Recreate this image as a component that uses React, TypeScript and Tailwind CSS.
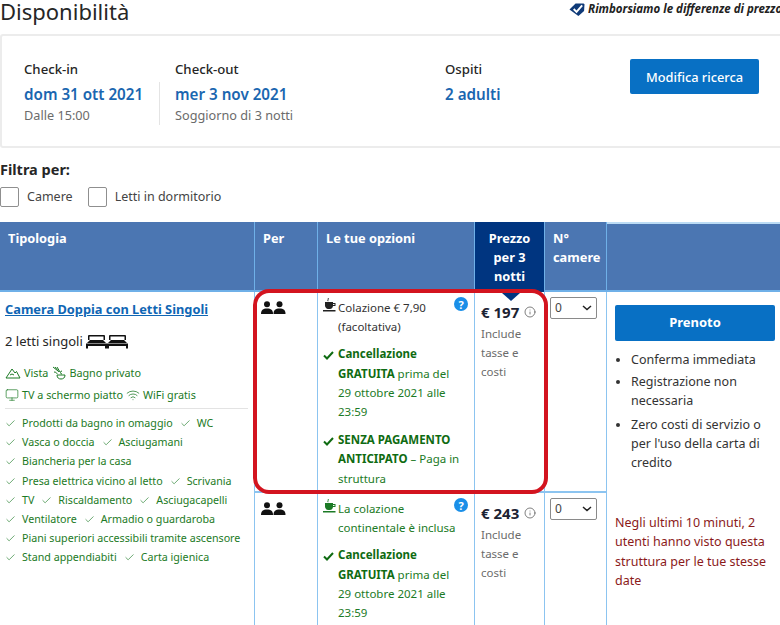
import { Check, Info, Monitor, Wifi } from "lucide-react"

const People = () => (
  <svg width="25" height="14" viewBox="0 0 25 14" fill="#111">
    <circle cx="6" cy="3.2" r="3" />
    <path d="M0 13c0-4 2-5.500 6-5.500s6 1.500 6 5.500z" />
    <circle cx="18.500" cy="3.200" r="3" />
    <path d="M12.500 13c0-4 2-5.500 6-5.500s6 1.500 6 5.500z" />
  </svg>
)

const Bed = () => (
  <svg width="21" height="15" viewBox="0 0 21 15" fill="#111">
    <path d="M3 1h15a1 1 0 0 1 1 1v4h-1.500V2.500h-14V6H2V2a1 1 0 0 1 1-1z" />
    <path d="M4 6h13l3 3H1z" />
    <rect x="0" y="9.500" width="21" height="2.500" />
    <rect x="0" y="12" width="2" height="2.500" />
    <rect x="19" y="12" width="2" height="2.500" />
  </svg>
)

const Cup = ({ color }: { color: string }) => (
  <svg width="13" height="15" viewBox="0 0 13 15" fill={color} className="shrink-0">
    <path d="M5.500 0c1 1 -1 2 0 3.200h-.8c-1-1 .8-2 0-3.200z" />
    <path d="M2 4h8v1h2.500v3H10c-.3 2-1.500 3-3 3H5C3.500 11 2.300 9.500 2 8zM10 6v1h1.500V6z" />
    <rect x="0" y="12" width="12.500" height="1.500" />
  </svg>
)

const Help = () => (
  <span className="absolute right-[6px] top-[5px] flex h-[14px] w-[14px] items-center justify-center rounded-full bg-[#1a8fe8] text-[11px] font-bold leading-none text-white">
    ?
  </span>
)

const GreenCheck = () => (
  <svg width="11" height="9" viewBox="0 0 11 9" className="absolute left-0 top-[7px]">
    <path d="M1 4.500 4 7.500 10 1" fill="none" stroke="#0f6b12" strokeWidth="2" />
  </svg>
)

const Perk = ({ label }: { label: string }) => (
  <span className="mr-[7px] inline-flex items-center gap-[6px]">
    <Check size={11} strokeWidth={1.4} className="text-[#1c7a25]" />
    {label}
  </span>
)

const perkRows = [
  ["Prodotti da bagno in omaggio", "WC"],
  ["Vasca o doccia", "Asciugamani"],
  ["Biancheria per la casa"],
  ["Presa elettrica vicino al letto", "Scrivania"],
  ["TV", "Riscaldamento", "Asciugacapelli"],
  ["Ventilatore", "Armadio o guardaroba"],
  ["Piani superiori accessibili tramite ascensore"],
  ["Stand appendiabiti", "Carta igienica"],
]

const RateOptions = ({ breakfast }: { breakfast: "paid" | "included" }) => (
  <div className="relative h-full border-r border-[#8cc4f0] pl-[5px] pr-[6px] pt-[6px] text-[11.5px] leading-[19.2px]">
    <Help />
    {breakfast === "paid" ? (
      <div className="relative pl-[15px] text-[#333]">
        <span className="absolute left-0 top-0">
          <Cup color="#222" />
        </span>
        Colazione € 7,90
        <br />
        (facoltativa)
      </div>
    ) : (
      <div className="relative pl-[15px] text-[#1b7a25]">
        <span className="absolute left-0 top-0">
          <Cup color="#1b7a25" />
        </span>
        La colazione
        <br />
        continentale è inclusa
      </div>
    )}
    <div className="relative mt-[8px] pl-[15px] text-[#1b7a25]">
      <GreenCheck />
      <b className="text-[#0f6b12]">Cancellazione</b>
      <br />
      <b className="text-[#0f6b12]">GRATUITA</b> prima del
      <br />
      29 ottobre 2021 alle
      <br />
      23:59
    </div>
    {breakfast === "paid" && (
      <div className="relative mt-[9px] pl-[15px] text-[#1b7a25]">
        <GreenCheck />
        <b className="text-[#0f6b12]">SENZA PAGAMENTO</b>
        <br />
        <b className="text-[#0f6b12]">ANTICIPATO</b> – Paga in
        <br />
        struttura
      </div>
    )}
  </div>
)

const Price = ({ value }: { value: string }) => (
  <div className="h-full border-r border-[#8cc4f0] pl-[6px] pt-[8px]">
    <div className="flex items-center gap-[5px]">
      <span className="text-[15px] font-bold leading-[24px] text-[#1c2333]">€ {value}</span>
      <Info size={12} strokeWidth={1.5} className="text-[#555]" />
    </div>
    <div className="w-[50px] text-[11.5px] leading-[19.2px] text-[#6b6b6b]">Include tasse e costi</div>
  </div>
)

const RoomSelect = () => (
  <div className="h-full pl-[5px] pt-[5px]">
    <div className="flex h-[22px] w-[47px] items-center justify-between rounded-[2px] border border-[#8a8a8a] bg-white pl-[4px] pr-[4px] text-[12px] text-[#444]">
      0
      <svg width="10" height="6" viewBox="0 0 10 6">
        <path d="M1 1l4 3.500L9 1" fill="none" stroke="#222" strokeWidth="1.500" />
      </svg>
    </div>
  </div>
)

export default function App() {
  return (
    <div
      className="relative h-[625px] w-[780px] overflow-hidden bg-white text-[#262626]"
      style={{ fontFamily: '"Noto Sans", sans-serif' }}
    >
      <div className="flex h-[34px] items-start justify-between">
        <h1 className="text-[22px] leading-[22px] text-[#262626]">Disponibilità</h1>
        <div className="flex items-center gap-[3px] pt-[1px] text-[11.5px] font-bold italic leading-[16px] text-[#222] whitespace-nowrap">
          <svg width="16" height="15" viewBox="0 0 17 15">
            <path d="M0.500 7.500 7 1h8.500l1 1-.5 7-6 5.500z" fill="#0f3a78" />
            <path d="M5 7l3 3 6-7" fill="none" stroke="#fff" strokeWidth="2" />
          </svg>
          <span className="w-[192px] overflow-hidden">Rimborsiamo le differenze di prezzo</span>
        </div>
      </div>

      <div className="flex h-[114px] items-start rounded-l-[3px] border-y-2 border-l-2 border-[#ececec] pl-[22px] text-[12.700px] leading-[20px]">
        <div className="mt-[23px] w-[135px]">
          <div className="text-[13.200px] font-medium">Check-in</div>
          <div className="mt-[5px] text-[15.200px] font-semibold text-[#1a66b0]">dom 31 ott 2021</div>
          <div className="mt-[1px] text-[#6b6b6b]">Dalle 15:00</div>
        </div>
        <div className="mt-[46px] h-[43px] w-px bg-[#e4e4e4]" />
        <div className="mt-[23px] w-[285px] pl-[15px]">
          <div className="text-[13.200px] font-medium">Check-out</div>
          <div className="mt-[5px] text-[15.200px] font-semibold text-[#1a66b0]">mer 3 nov 2021</div>
          <div className="mt-[1px] text-[#6b6b6b]">Soggiorno di 3 notti</div>
        </div>
        <div className="mt-[23px] w-[185px]">
          <div className="text-[13.200px] font-medium">Ospiti</div>
          <div className="mt-[5px] text-[15.200px] font-semibold text-[#1a66b0]">2 adulti</div>
        </div>
        <button className="mt-[23px] h-[35px] w-[129px] rounded-[2px] bg-[#0870c4] text-[12.800px] font-medium text-white">
          Modifica ricerca
        </button>
      </div>

      <div className="mt-[11px] text-[14.500px] font-bold leading-[20px]">Filtra per:</div>
      <div className="mt-[8px] flex h-[20px] items-center text-[12.500px] text-[#444]">
        <span className="h-[20px] w-[19px] rounded-[2px] border border-[#8f8f8f]" />
        <span className="ml-[8px]">Camere</span>
        <span className="ml-[15px] h-[20px] w-[19px] rounded-[2px] border border-[#8f8f8f]" />
        <span className="ml-[8px]">Letti in dormitorio</span>
      </div>

      <div className="mt-[15px] grid h-[403px] grid-cols-[255px_63px_157px_70px_62px_173px] grid-rows-[70px_201px_1fr]">
        <div className="border-b-2 border-r border-[#6fb0e8] bg-[#4b76b2] pl-[8px] pt-[6px] text-[12.800px] font-bold leading-[20px] text-white">Tipologia</div>
        <div className="border-b-2 border-r border-[#6fb0e8] bg-[#4b76b2] pl-[8px] pt-[6px] text-[12.800px] font-bold leading-[20px] text-white">Per</div>
        <div className="border-b-2 border-r border-[#6fb0e8] bg-[#4b76b2] pl-[8px] pt-[6px] text-[12.800px] font-bold leading-[20px] text-white">Le tue opzioni</div>
        <div className="border-r border-[#6fb0e8] bg-[#003580] pt-[7px] text-center text-[12.800px] font-bold leading-[19px] text-white">
          Prezzo
          <br />
          per 3
          <br />
          notti
        </div>
        <div className="border-b-2 border-r border-[#6fb0e8] bg-[#4b76b2] pl-[8px] pt-[7px] text-[12.800px] font-bold leading-[19px] text-white">
          N°
          <br />
          camere
        </div>
        <div className="border-b-2 border-t-2 border-[#bcdcf5] border-b-[#6fb0e8] bg-[#4b76b2]" />

        <div className="row-span-2 border-r border-[#8cc4f0] pl-[5px] pr-[6px] pt-[4px]">
          <a className="text-[12.800px] font-bold leading-[18px] text-[#0f66b4] underline">Camera Doppia con Letti Singoli</a>
          <div className="mt-[11px] flex h-[20px] items-center gap-[3px] text-[13px] leading-[20px] text-[#262626]">
            2 letti singoli
            <span className="flex">
              <Bed />
              <Bed />
            </span>
          </div>
          <div className="mt-[11px] text-[10.800px] leading-[22px] text-[#1c7a25]">
            <div className="flex items-center gap-[3px]">
              <svg width="16" height="12" viewBox="0 0 16 12" fill="none" stroke="#1c7a25" strokeWidth="1">
                <path d="M1 11 7 2l3 4 1.500-1.500L15 11zM5 8l2-1 2 1" />
              </svg>
              Vista
              <svg width="14" height="14" viewBox="0 0 14 14" fill="none" stroke="#1c7a25" strokeWidth="1" className="ml-[1px]">
                <path d="M1 1l5 4M3 1l4 5M5 1l3 5M2 6c2 0 3 1 3 2M5 9h8c0 3-2 4-4 4s-4-1-4-4zM10 5a1.500 1.500 0 1 0 0 3" />
              </svg>
              Bagno privato
            </div>
            <div className="flex items-center gap-[3px]">
              <Monitor size={14} strokeWidth={1.2} />
              TV a schermo piatto
              <Wifi size={14} strokeWidth={1.3} />
              WiFi gratis
            </div>
          </div>
          <div className="mt-[2px] border-t border-[#e3e3e3] pt-[5px] text-[10.700px] leading-[19.2px] text-[#1c7a25]">
            {perkRows.map((row) => (
              <div key={row[0]} className="flex h-[19.2px] items-center whitespace-nowrap">
                {row.map((label) => (
                  <Perk key={label} label={label} />
                ))}
              </div>
            ))}
          </div>
        </div>

        <div className="border-b-2 border-r border-[#8cc4f0] pl-[6px] pt-[9px]"><People /></div>
        <div className="border-b-2 border-[#8cc4f0]"><RateOptions breakfast="paid" /></div>
        <div className="border-b-2 border-[#8cc4f0]"><Price value="197" /></div>
        <div className="border-b-2 border-r border-[#8cc4f0]"><RoomSelect /></div>

        <div className="row-span-2 pl-[8px] pt-[13px]">
          <button className="h-[36px] w-[160px] rounded-[2px] bg-[#0870c4] text-[13px] font-bold text-white">Prenoto</button>
          <ul className="mt-[9px] list-disc pl-[16px] text-[12.500px] leading-[19.2px] text-[#333]">
            <li>Conferma immediata</li>
            <li className="mt-[3px]">Registrazione non necessaria</li>
            <li className="mt-[4px]">Zero costi di servizio o per l'uso della carta di credito</li>
          </ul>
          <p className="mt-[41px] text-[12.500px] leading-[19.2px] text-[#8b1a1a]">
            Negli ultimi 10 minuti, 2 utenti hanno visto questa struttura per le tue stesse date
          </p>
        </div>

        <div className="border-r border-[#8cc4f0] pl-[6px] pt-[9px]"><People /></div>
        <RateOptions breakfast="included" />
        <Price value="243" />
        <div className="border-r border-[#8cc4f0]"><RoomSelect /></div>
      </div>

      {/* evidenziazione rossa sopra la tariffa */}
      <div className="pointer-events-none absolute left-[253px] top-[289px] h-[205px] w-[295px] rounded-[16px] border-[4px] border-[#d3141f]" />
      <div className="absolute left-[502px] top-[293px] h-0 w-0 border-x-[9px] border-t-[8px] border-x-transparent border-t-[#003580]" />
    </div>
  )
}
